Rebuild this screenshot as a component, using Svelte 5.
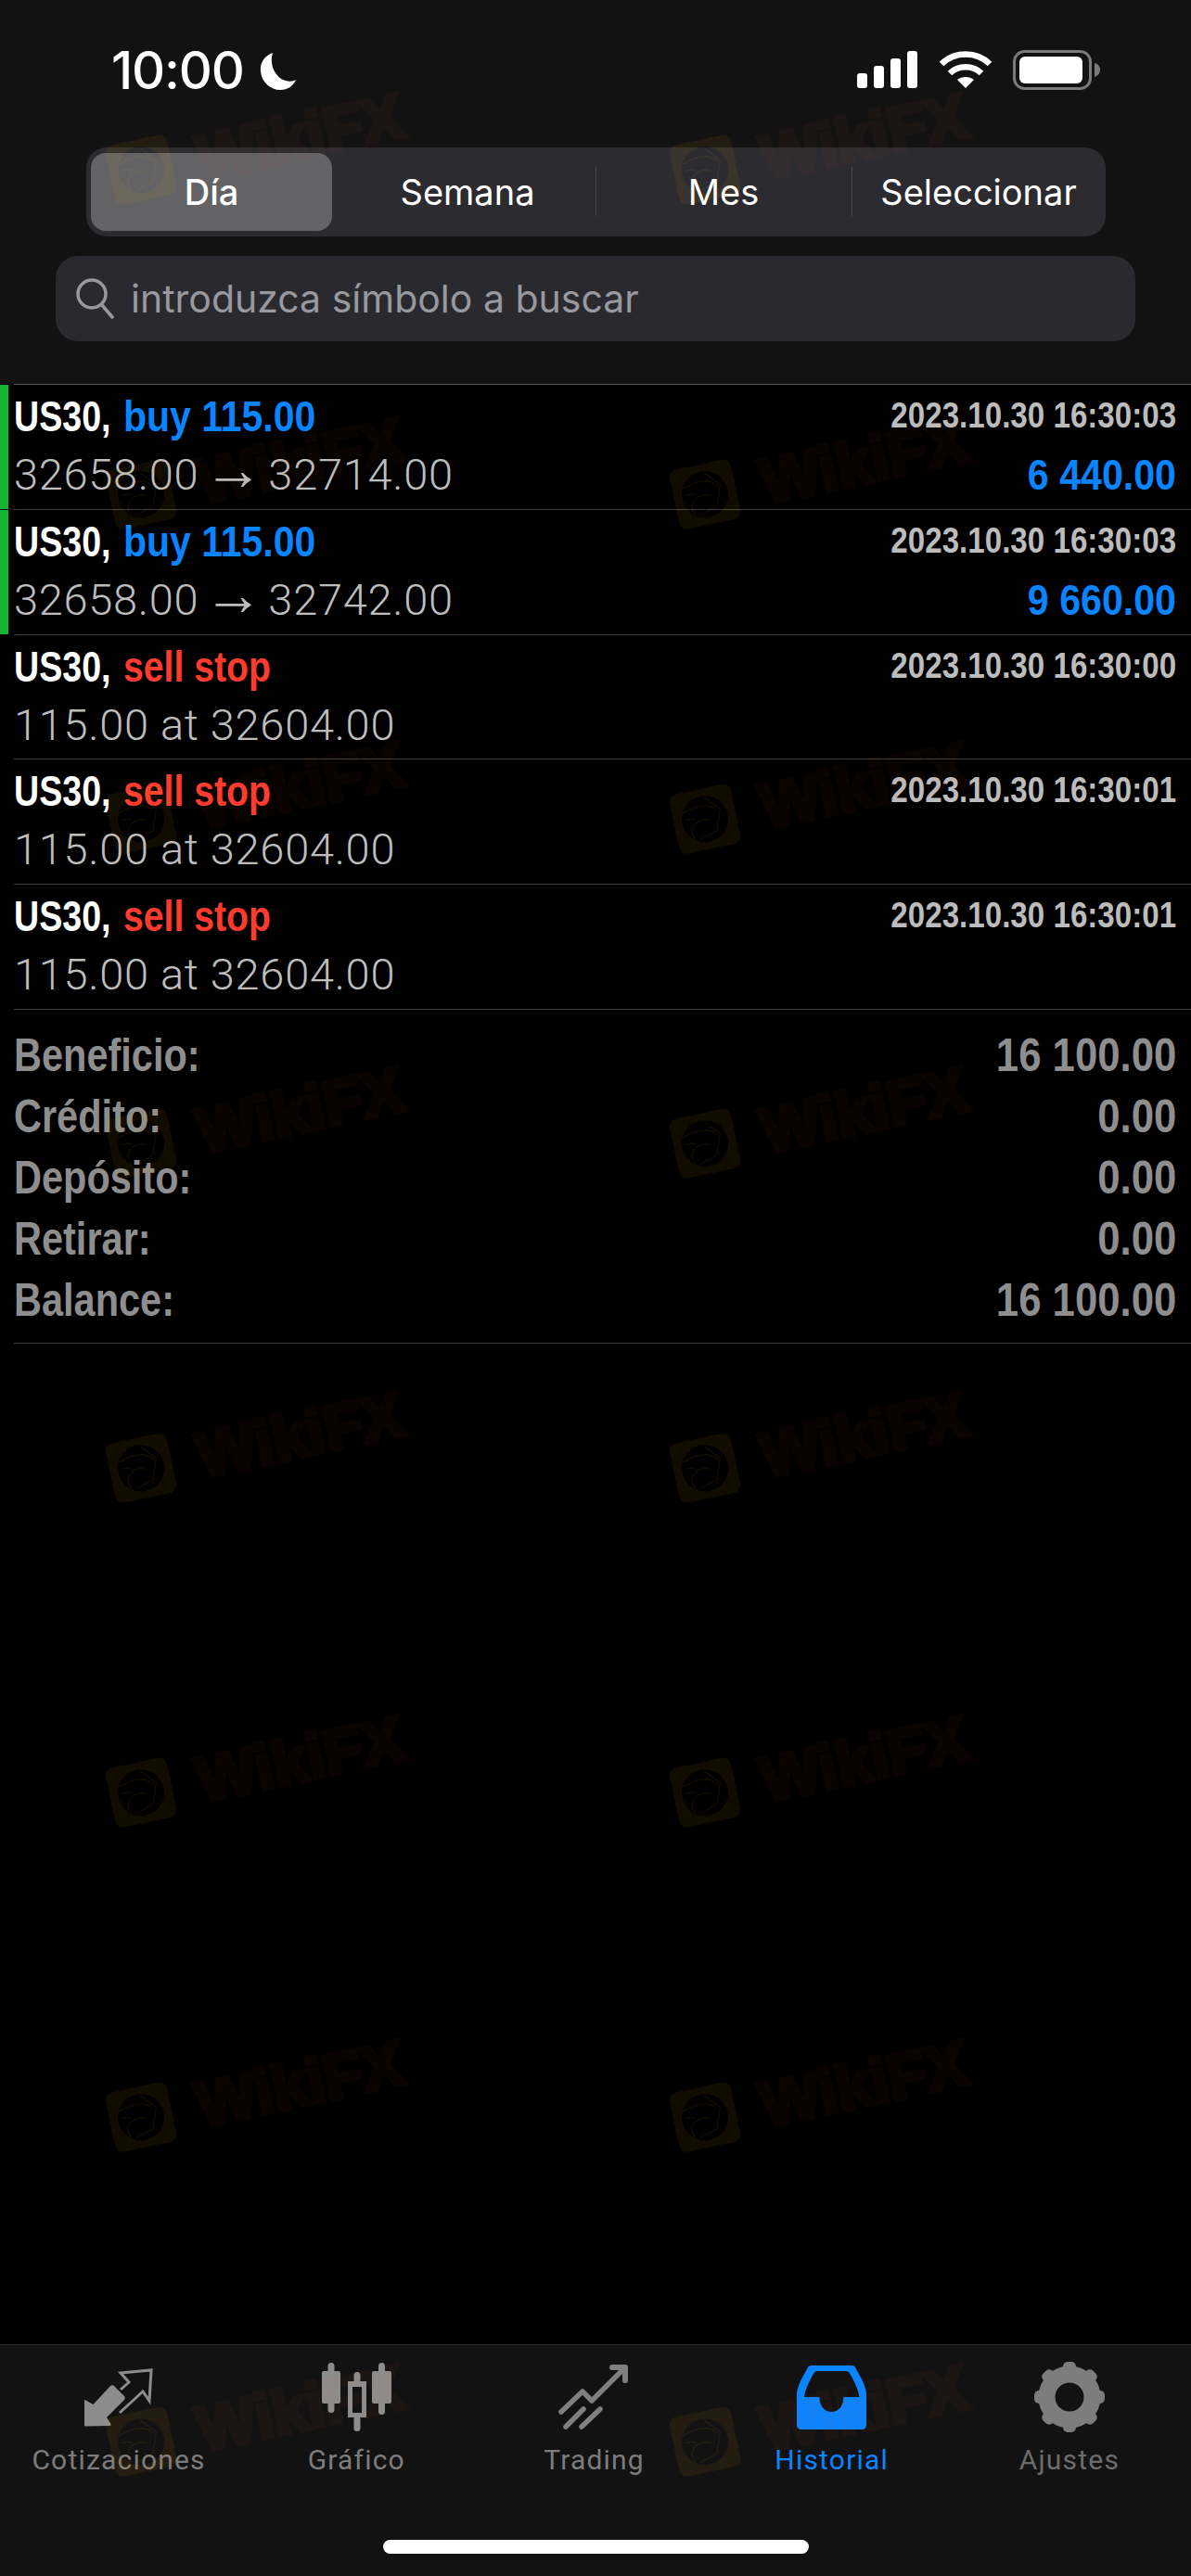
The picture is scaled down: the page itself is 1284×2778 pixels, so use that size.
<script>
  const segments = ['Día', 'Semana', 'Mes', 'Seleccionar'];

  const orders = [
    { kind: 'buy 115.00', time: '2023.10.30 16:30:03', from: '32658.00', to: '32714.00', profit: '6 440.00' },
    { kind: 'buy 115.00', time: '2023.10.30 16:30:03', from: '32658.00', to: '32742.00', profit: '9 660.00' },
    { kind: 'sell stop', time: '2023.10.30 16:30:00', detail: '115.00 at 32604.00', profit: '' },
    { kind: 'sell stop', time: '2023.10.30 16:30:01', detail: '115.00 at 32604.00', profit: '' },
    { kind: 'sell stop', time: '2023.10.30 16:30:01', detail: '115.00 at 32604.00', profit: '' }
  ];

  const totals = [
    ['Beneficio:', '16 100.00'],
    ['Crédito:', '0.00'],
    ['Depósito:', '0.00'],
    ['Retirar:', '0.00'],
    ['Balance:', '16 100.00']
  ];

  const tabs = ['Cotizaciones', 'Gráfico', 'Trading', 'Historial', 'Ajustes'];

  // watermark repeats in two columns, eight rows
  const marks = Array.from({ length: 16 }, (_, i) => i);
  const teeth = [0, 45, 90, 135, 180, 225, 270, 315];
</script>

<div class="screen">
  <header class="top">
    <div class="status">
      <div class="clock">
        <span>10:00</span>
        <svg class="moon" width="40" height="42" viewBox="0 0 40 42">
          <path d="M14 1C5 4 0 12 1 21c1 12 11 20 21 20 8 0 14-4 17-11-3 2-7 2-11 1C17 28 10 14 14 1z" fill="#fff" />
        </svg>
      </div>
      <div class="indicators">
        <svg width="66" height="42" viewBox="0 0 66 42" fill="#fff">
          <rect x="0" y="25" width="11" height="16" rx="3" />
          <rect x="18" y="17" width="11" height="24" rx="3" />
          <rect x="36" y="9" width="11" height="32" rx="3" />
          <rect x="54" y="1" width="11" height="40" rx="3" />
        </svg>
        <svg width="58" height="42" viewBox="0 0 58 42" fill="none" stroke="#fff" stroke-width="6.5">
          <path d="M3 15C17 1 41 1 55 15" />
          <path d="M12 25c9-9 25-9 34 0" />
          <path d="M29 41l-9-9c5-4 13-4 18 0z" fill="#fff" stroke="none" />
        </svg>
        <svg width="95" height="44" viewBox="0 0 95 44">
          <rect x="1.5" y="1.5" width="82" height="40" rx="11" fill="none" stroke="#7a7a7a" stroke-width="3" />
          <rect x="7" y="7" width="68" height="29" rx="6" fill="#fff" />
          <path d="M88 14c4 1 6 4 6 7s-2 7-6 8z" fill="#7a7a7a" />
        </svg>
      </div>
    </div>

    <div class="segmented">
      {#each segments as label, i}
        <div class="segment" class:active={i === 0} class:divided={i > 1}>{label}</div>
      {/each}
    </div>

    <div class="search">
      <svg width="46" height="44" viewBox="0 0 46 44" fill="none" stroke="#98989f" stroke-width="3.5">
        <circle cx="19" cy="17" r="15" />
        <path d="M30 29l11 13" stroke-linecap="round" />
      </svg>
      <span>introduzca símbolo a buscar</span>
    </div>
  </header>

  <main class="list">
    <div class="rule"></div>
    {#each orders as order}
      <div class="row">
        <div class="bar" class:win={order.profit}></div>
        <div class="cells">
          <div class="line first">
            <span class="title">
              <span class="symbol">US30,</span>
              <span class="kind {order.profit ? 'blue' : 'red'}">{order.kind}</span>
            </span>
            <span class="time">{order.time}</span>
          </div>
          <div class="line second">
            {#if order.profit}
              <span class="detail">{order.from} <span class="arrow">→</span> {order.to}</span>
              <span class="profit blue">{order.profit}</span>
            {:else}
              <span class="detail">{order.detail}</span>
            {/if}
          </div>
        </div>
      </div>
    {/each}

    <div class="totals">
      {#each totals as [label, value]}
        <div class="total"><span class="key">{label}</span><span class="sum">{value}</span></div>
      {/each}
    </div>
  </main>

  <nav class="tabbar">
    <div class="tabs">
      {#each tabs as tab, i}
        <div class="tab" class:current={i === 3} class:dim={i === 4}>
          <svg width="100" height="90" viewBox="0 0 100 90">
            {#if i === 0}
              <path d="M14.5 48.5l8 4.500 18.500-20c1-1 3-1 4 0l11 11c1 1 1 3 0 4l-19 19 4.500 7c.5 1-.5 2-1.500 2l-25.500 .5c-1 0-1.500-.5-1.500-1.500l0-26c0-.8 .8-1 1.500-.5z" fill="#8c8c8c" />
              <path d="M51 62l25-23 7 10 2-33-33 3 9 10-9 8" fill="none" stroke="#8c8c8c" stroke-width="3" />
            {:else if i === 1}
              <g fill="#8c8c8c">
                <rect x="13" y="17" width="20" height="35" rx="2" />
                <rect x="19.500" y="8" width="7" height="54" rx="3.500" />
                <path fill-rule="evenodd" d="M41 28h20v39H41zM46 34v28h10V34z" />
                <rect x="47.500" y="18" width="7" height="12" rx="3.500" />
                <rect x="47.500" y="65" width="7" height="17" rx="3.500" />
                <rect x="67" y="17" width="21" height="35" rx="2" />
                <rect x="74" y="8" width="7" height="56" rx="3.500" />
              </g>
            {:else if i === 2}
              <g fill="none" stroke="#808080" stroke-width="5.500" stroke-linecap="round" stroke-linejoin="round">
                <path d="M15 61l23-22 10 10 35-35" />
                <path d="M20 77l19-19M37 77l20-19" />
                <path d="M70 13h14v14" stroke-width="6" />
              </g>
            {:else if i === 3}
              <path fill-rule="evenodd" d="M28 11h43c3 0 4 1 5 4 6 10 11 20 11 27v33c0 3-2 5-5 5H17c-3 0-5-2-5-5V42c0-7 5-17 11-27 1-3 2-4 5-4zM35 17c-3 0-4 1-5 3-5 9-9 17-10 25h16.400c0 9 5 16 13 16s13-7 13-16h17c-1-8-5-16-10-25-1-2-2-3-5-3z" fill="#0a84ff" />
            {:else}
              <g transform="translate(50 45)" fill="none">
                <circle r="24.500" stroke="#7d7d7d" stroke-width="18" />
                {#each teeth as angle}
                  <rect x="-7" y="-38" width="14" height="12" rx="5" fill="#7d7d7d" transform="rotate({angle})" />
                {/each}
              </g>
            {/if}
          </svg>
          <span>{tab}</span>
        </div>
      {/each}
    </div>
    <div class="home"></div>
  </nav>

  <div class="watermarks" aria-hidden="true">
    {#each marks as m (m)}
      <div class="mark">
        <svg width="68" height="66" viewBox="0 0 68 66">
          <path fill-rule="evenodd" fill="#ffb400" d="M10 0h48c6 0 10 4 10 10v46c0 6-4 10-10 10H10C4 66 0 62 0 56V10C0 4 4 0 10 0zM34 8a25 25 0 1 0 0 50 25 25 0 0 0 0-50z" />
          <path fill="none" stroke="#ffb400" stroke-width="1.500" d="M12 22c8-3 16-5 26-3 4 1 8 4 11 8M38 10l14 16-8 22M12 30c5-1 9 0 12 2M19 52c-3-6-2-12 3-16 6-4 13-4 18 0M24 54l20-6" />
        </svg>
        <span>WikiFX</span>
      </div>
    {/each}
  </div>
</div>

<style>
  :global(body) {
    background: #000;
  }

  .screen {
    position: relative;
    width: 1284px;
    height: 2778px;
    display: flex;
    flex-direction: column;
    overflow: hidden;
    background: #000;
    color: #fff;
    font-family: "Liberation Sans", sans-serif;
  }

  /* header */
  .top {
    height: 414px;
    box-sizing: border-box;
    background: #121212;
  }

  .status {
    height: 159px;
    box-sizing: border-box;
    padding: 54px 97px 0 120px;
    display: flex;
    justify-content: space-between;
    align-items: flex-start;
  }

  .clock {
    display: flex;
    align-items: center;
    gap: 17px;
    height: 44px;
    font-family: Inter, sans-serif;
    font-size: 56px;
    font-weight: 500;
    letter-spacing: -1.2px;
  }

  .moon {
    margin-top: 2px;
  }

  .indicators {
    display: flex;
    align-items: flex-start;
    gap: 22px;
  }

  .segmented {
    width: 1099px;
    height: 96px;
    margin-left: 93px;
    box-sizing: border-box;
    padding: 6px 0 6px 5px;
    display: grid;
    grid-template-columns: 260px 284px 276px 1fr;
    background: #2b2b30;
    border-radius: 22px;
    font-family: Inter, sans-serif;
    font-size: 38px;
  }

  .segment {
    position: relative;
    display: flex;
    align-items: center;
    justify-content: center;
    border-radius: 16px;
  }

  .segment:nth-child(2) {
    padding-left: 8px;
  }

  .segment.active {
    background: #636366;
    font-weight: 500;
  }

  .segment.divided::before {
    content: '';
    position: absolute;
    left: 0;
    top: 15px;
    height: 53px;
    border-left: 1.500px solid #48484c;
  }

  .search {
    width: 1164px;
    height: 92px;
    margin: 21px 0 0 60px;
    box-sizing: border-box;
    padding: 0 0 0 20px;
    display: flex;
    align-items: center;
    gap: 15px;
    background: #2a2a2e;
    border-radius: 24px;
    color: #98989f;
    font-family: Inter, sans-serif;
    font-size: 41px;
  }

  /* order list: the original face is a condensed bold, so the Arial metric face gets squeezed */
  .list {
    flex: 1;
    font-weight: 700;
  }

  .rule {
    height: 1px;
    margin-left: 15px;
    background: #5a5a5a;
  }

  .row {
    display: flex;
    height: 134.800px;
  }

  .bar {
    width: 9px;
    margin-bottom: 1px;
  }

  .bar.win {
    background: #15b532;
  }

  .cells {
    flex: 1;
    margin-left: 6px;
    padding-right: 16px;
    box-sizing: border-box;
    border-bottom: 1px solid #404040;
  }

  .line {
    display: flex;
    justify-content: space-between;
    align-items: baseline;
  }

  .first {
    height: 63px;
    line-height: 67px;
  }

  .second {
    height: 65px;
    line-height: 67px;
  }

  .title {
    display: flex;
    align-items: baseline;
    font-size: 47px;
    white-space: nowrap;
  }

  .symbol {
    display: inline-block;
    width: 118px;
    transform: scaleX(0.8);
    transform-origin: left;
  }

  .kind {
    display: inline-block;
    transform: scaleX(0.872);
    transform-origin: left;
  }

  .kind.red {
    transform: scaleX(0.834);
  }

  .time {
    display: inline-block;
    font-size: 39px;
    color: #bcbcbc;
    white-space: nowrap;
    transform: translateY(-4px) scaleX(0.85);
    transform-origin: right;
  }

  .detail {
    font-family: Roboto, sans-serif;
    font-size: 47px;
    font-weight: 300;
    letter-spacing: 0.7px;
    color: #bdbdbd;
  }

  .arrow {
    margin: 0 -7px;
    font-family: "Liberation Sans", sans-serif;
    font-size: 64px;
    font-weight: 400;
    line-height: 0;
  }

  .profit {
    display: inline-block;
    font-size: 47px;
    white-space: nowrap;
    transform: scaleX(0.875);
    transform-origin: right;
  }

  .blue {
    color: #0a84ff;
  }

  .red {
    color: #ff3b30;
  }

  .totals {
    height: 360px;
    box-sizing: border-box;
    margin-left: 15px;
    padding: 16px 16px 0 0;
    border-bottom: 1px solid #3c3c3c;
    color: #8e8e8e;
    font-size: 50px;
  }

  .total {
    height: 66px;
    display: flex;
    justify-content: space-between;
    align-items: center;
  }

  .key {
    display: inline-block;
    transform: scaleX(0.83);
    transform-origin: left;
  }

  .sum {
    display: inline-block;
    white-space: nowrap;
    transform: scaleX(0.875);
    transform-origin: right;
  }

  /* tab bar */
  .tabbar {
    height: 250px;
    box-sizing: border-box;
    padding-top: 11px;
    display: flex;
    flex-direction: column;
    background: #121212;
    border-top: 1px solid #2c2c2c;
  }

  .tabs {
    flex: 1;
    display: grid;
    grid-template-columns: repeat(5, 1fr);
    padding-right: 3px;
  }

  .tab {
    display: flex;
    flex-direction: column;
    align-items: center;
    color: #7c7c7c;
    font-family: Roboto, sans-serif;
    font-size: 30px;
    letter-spacing: 1.2px;
    line-height: 36px;
  }

  .tab span {
    margin-top: 5px;
  }

  .tab.current {
    color: #0a84ff;
  }

  .tab.dim {
    color: #6c6c6c;
  }

  .home {
    width: 459px;
    height: 15px;
    margin: 0 0 24px 413px;
    background: #fff;
    border-radius: 8px;
  }

  /* WikiFX watermark lying over everything */
  .watermarks {
    position: absolute;
    inset: 0;
    padding: 158px 0 0 112px;
    display: grid;
    grid-template-columns: 608px 608px;
    grid-auto-rows: 350px;
    pointer-events: none;
  }

  .mark {
    display: flex;
    align-items: flex-end;
    gap: 28px;
    height: 66px;
    transform: rotate(-12deg);
    transform-origin: top left;
    white-space: nowrap;
  }

  .mark svg {
    opacity: 0.065;
    flex: none;
  }

  .mark span {
    opacity: 0.035;
    color: #ff6040;
    font-weight: 700;
    font-size: 68px;
    line-height: 66px;
    -webkit-text-stroke: 5px #ff6040;
  }
</style>
